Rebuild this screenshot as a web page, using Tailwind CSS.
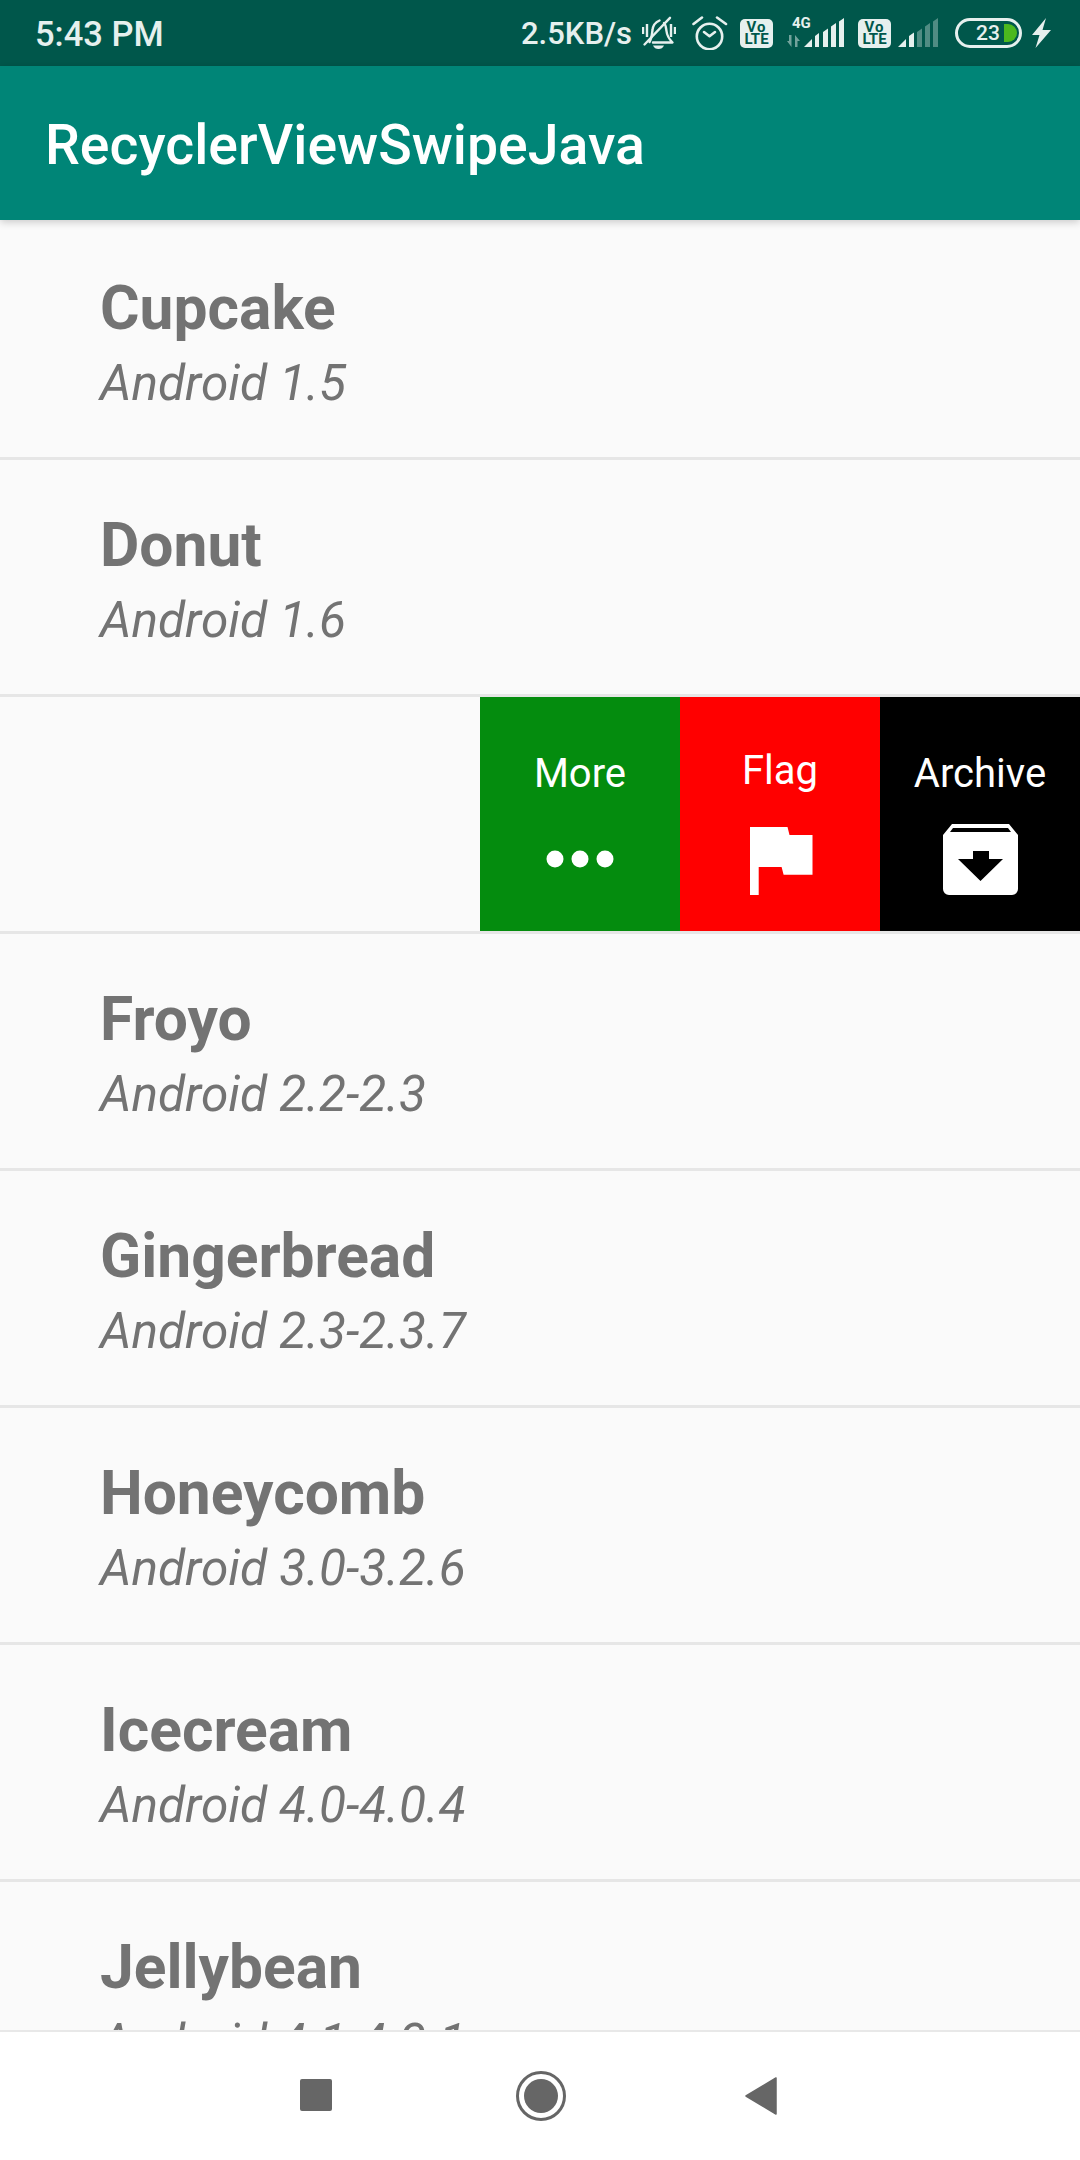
<!DOCTYPE html>
<html><head><meta charset="utf-8"><script src="https://cdn.jsdelivr.net/npm/@tailwindcss/browser@4"></script></head>
<body class="m-0 bg-[#fafafa] font-['Roboto',sans-serif]">
<div class="w-[1080px] h-[2160px] flex flex-col overflow-hidden relative">
  <div class="h-[66px] shrink-0 bg-[#00574b] flex items-center justify-between text-[#e6f0ee] pl-[35px] pr-[29px]">
    <span class="text-[34.500px] font-medium leading-none mt-[3px]">5:43 PM</span>
    <div class="flex items-center h-full">
      <span class="text-[31px] font-medium leading-none mr-[10px]">2.5KB/s</span>
      <svg class="w-[34px] h-[34px] mr-[16px]" viewBox="0 0 34 34" fill="none" stroke="#e6f0ee" stroke-width="2.400" stroke-linecap="round" stroke-linejoin="round"><path d="M22 7C24 9 24 12 24.500 15C25 20 28 24 30.500 26.500H11"/><path d="M7.500 26C10 22 10 17 10.500 14C11 9 14 6 17.500 4.500"/><path d="M11 29.500H22C21 32 19 33 16.500 33C14 33 12 32 11 29.500Z" fill="#e6f0ee" stroke="none"/><path d="M2.500 28.500L28 1.800"/><path d="M1 11v7M5 8v13M29 8v13M33 11v7" stroke-linecap="butt"/></svg>
      <svg class="w-[36px] h-[34px] mr-[12px]" viewBox="0 0 36 34" fill="none" stroke="#e6f0ee" stroke-width="2.600" stroke-linecap="round" stroke-linejoin="round"><circle cx="17.500" cy="20.500" r="12.700"/><path d="M12 16l5.500 4.200 5.500-4.200"/><path d="M1.500 8L10 1.500M25 1.500L34 8"/></svg>
      <div class="w-[33px] h-[29px] rounded-[5px] bg-[#e6f0ee] text-[#00574b] flex flex-col items-center justify-center text-[15px] leading-[12px] font-bold mr-[14px]"><span class="tracking-[1px]">Vo</span><span>LTE</span></div>
      <div class="relative w-[57px] h-[32px] mr-[14px]">
        <span class="absolute left-[5px] top-0 text-[15px] leading-[12px] font-bold">4G</span>
        <svg class="absolute inset-0" width="57" height="32" viewBox="0 0 57 32" fill="#e6f0ee"><path d="M0 24h2V18h2.500V30zM8 30V18l5 6h-2.500v6z" opacity=".5"/><path d="M17 30l8-8v8zM28 30V19l4-3V30zM36 30V15l5-3.500V30zM44 30V9.500l5-3.500V30zM52 30V4.500l5-3.500V30z"/></svg>
      </div>
      <div class="w-[33px] h-[29px] rounded-[5px] bg-[#e6f0ee] text-[#00574b] flex flex-col items-center justify-center text-[15px] leading-[12px] font-bold mr-[7px]"><span class="tracking-[1px]">Vo</span><span>LTE</span></div>
      <svg class="w-[40px] h-[32px] mr-[17px]" viewBox="0 0 40 32" fill="#e6f0ee"><path d="M0 30l8-8v8zM11 30V19l5-3.500V30z"/><path d="M19 30V15l5-3.500V30zM27 30V9.500l5-3.500V30zM35 30V4.500l5-3.500V30z" opacity=".35"/></svg>
      <div class="relative w-[67px] h-[30px] rounded-full border-[3px] border-[#e6f0ee] mr-[10px]">
        <span class="absolute left-[18px] top-0 text-[21px] leading-[24px] font-medium">23</span>
        <div class="absolute left-[46px] top-[3px] w-[13px] h-[18px] bg-[#4cb81e] rounded-r-full"></div>
      </div>
      <svg class="w-[19px] h-[30px]" viewBox="0 0 19 30" fill="#e6f0ee"><path d="M14 0 L0 17h7.500L3.500 30 19 12h-8.500z"/></svg>
    </div>
  </div>
  <div class="h-[154px] shrink-0 bg-[#008577] flex items-center pl-[45px] pt-[6px] text-white text-[55.400px] font-medium shadow-[0_2px_8px_rgba(0,0,0,0.2)] relative z-10"><span>RecyclerViewSwipeJava</span></div>
  <div class="flex-1 overflow-hidden pt-[3px]">
    <div class="h-[237px] border-b-[3px] border-[#e6e6e6] pl-[100px] pt-[51px] box-border"><div class="text-[60.500px] font-bold text-[#737373] leading-[70px]">Cupcake</div><div class="text-[49.600px] italic text-[#737373] leading-[78px]">Android 1.5</div></div>
    <div class="h-[237px] border-b-[3px] border-[#e6e6e6] pl-[100px] pt-[51px] box-border"><div class="text-[60.500px] font-bold text-[#737373] leading-[70px]">Donut</div><div class="text-[49.600px] italic text-[#737373] leading-[78px]">Android 1.6</div></div>
    <div class="h-[237px] border-b-[3px] border-[#e6e6e6] flex justify-end box-border text-white text-[40px]">
      <div class="w-[200px] bg-[#048c0e] flex flex-col items-center pt-[54px]"><span class="leading-[46px]">More</span>
        <svg class="mt-[53px]" width="68" height="18" viewBox="0 0 68 18" fill="#fff"><circle cx="9" cy="9" r="8.500"/><circle cx="34" cy="9" r="8.500"/><circle cx="59" cy="9" r="8.500"/></svg>
      </div>
      <div class="w-[200px] bg-[#ff0000] flex flex-col items-center pt-[51px]"><span class="leading-[46px]">Flag</span>
        <svg class="mt-[33px] ml-[3px]" width="63" height="68" viewBox="0 0 63 68" fill="#fff"><path d="M0 0H37.500L39.500 8H62.500V47.700H33.600L31.600 40H8.700V68H0Z"/></svg>
      </div>
      <div class="w-[200px] bg-black flex flex-col items-center pt-[54px]"><span class="leading-[46px]">Archive</span>
        <svg class="mt-[27px]" width="75" height="71" viewBox="0 0 75 71" fill="#fff"><path fill-rule="evenodd" d="M9 0H66L75 11V65a6 6 0 0 1-6 6H6a6 6 0 0 1-6-6V11ZM10 4 7 8H68L65 4ZM30 27V35H15L37.500 57 60 35H46V27Z"/></svg>
      </div>
    </div>
    <div class="h-[237px] border-b-[3px] border-[#e6e6e6] pl-[100px] pt-[51px] box-border"><div class="text-[60.500px] font-bold text-[#737373] leading-[70px]">Froyo</div><div class="text-[49.600px] italic text-[#737373] leading-[78px]">Android 2.2-2.3</div></div>
    <div class="h-[237px] border-b-[3px] border-[#e6e6e6] pl-[100px] pt-[51px] box-border"><div class="text-[60.500px] font-bold text-[#737373] leading-[70px]">Gingerbread</div><div class="text-[49.600px] italic text-[#737373] leading-[78px]">Android 2.3-2.3.7</div></div>
    <div class="h-[237px] border-b-[3px] border-[#e6e6e6] pl-[100px] pt-[51px] box-border"><div class="text-[60.500px] font-bold text-[#737373] leading-[70px]">Honeycomb</div><div class="text-[49.600px] italic text-[#737373] leading-[78px]">Android 3.0-3.2.6</div></div>
    <div class="h-[237px] border-b-[3px] border-[#e6e6e6] pl-[100px] pt-[51px] box-border"><div class="text-[60.500px] font-bold text-[#737373] leading-[70px]">Icecream</div><div class="text-[49.600px] italic text-[#737373] leading-[78px]">Android 4.0-4.0.4</div></div>
    <div class="h-[237px] border-b-[3px] border-[#e6e6e6] pl-[100px] pt-[51px] box-border"><div class="text-[60.500px] font-bold text-[#737373] leading-[70px]">Jellybean</div><div class="text-[49.600px] italic text-[#737373] leading-[78px]">Android 4.1-4.3.1</div></div>
  </div>
  <div class="h-[130px] shrink-0 bg-white border-t-[2px] border-[#e8e8e8] relative z-10 flex items-start">
    <div class="w-[32px] h-[32px] ml-[300px] mt-[47px] bg-[#666] rounded-[2px]"></div>
    <svg class="ml-[184px] mt-[39px]" width="50" height="50" viewBox="0 0 50 50"><circle cx="25" cy="25" r="23.500" fill="none" stroke="#666" stroke-width="3"/><circle cx="25" cy="25" r="17" fill="#666"/></svg>
    <svg class="ml-[179px] mt-[45px]" width="32" height="38" viewBox="0 0 32 38"><path d="M31 1 V37 L1 19Z" fill="#666" stroke="#666" stroke-width="1.500" stroke-linejoin="round"/></svg>
  </div>
</div>
</body></html>
